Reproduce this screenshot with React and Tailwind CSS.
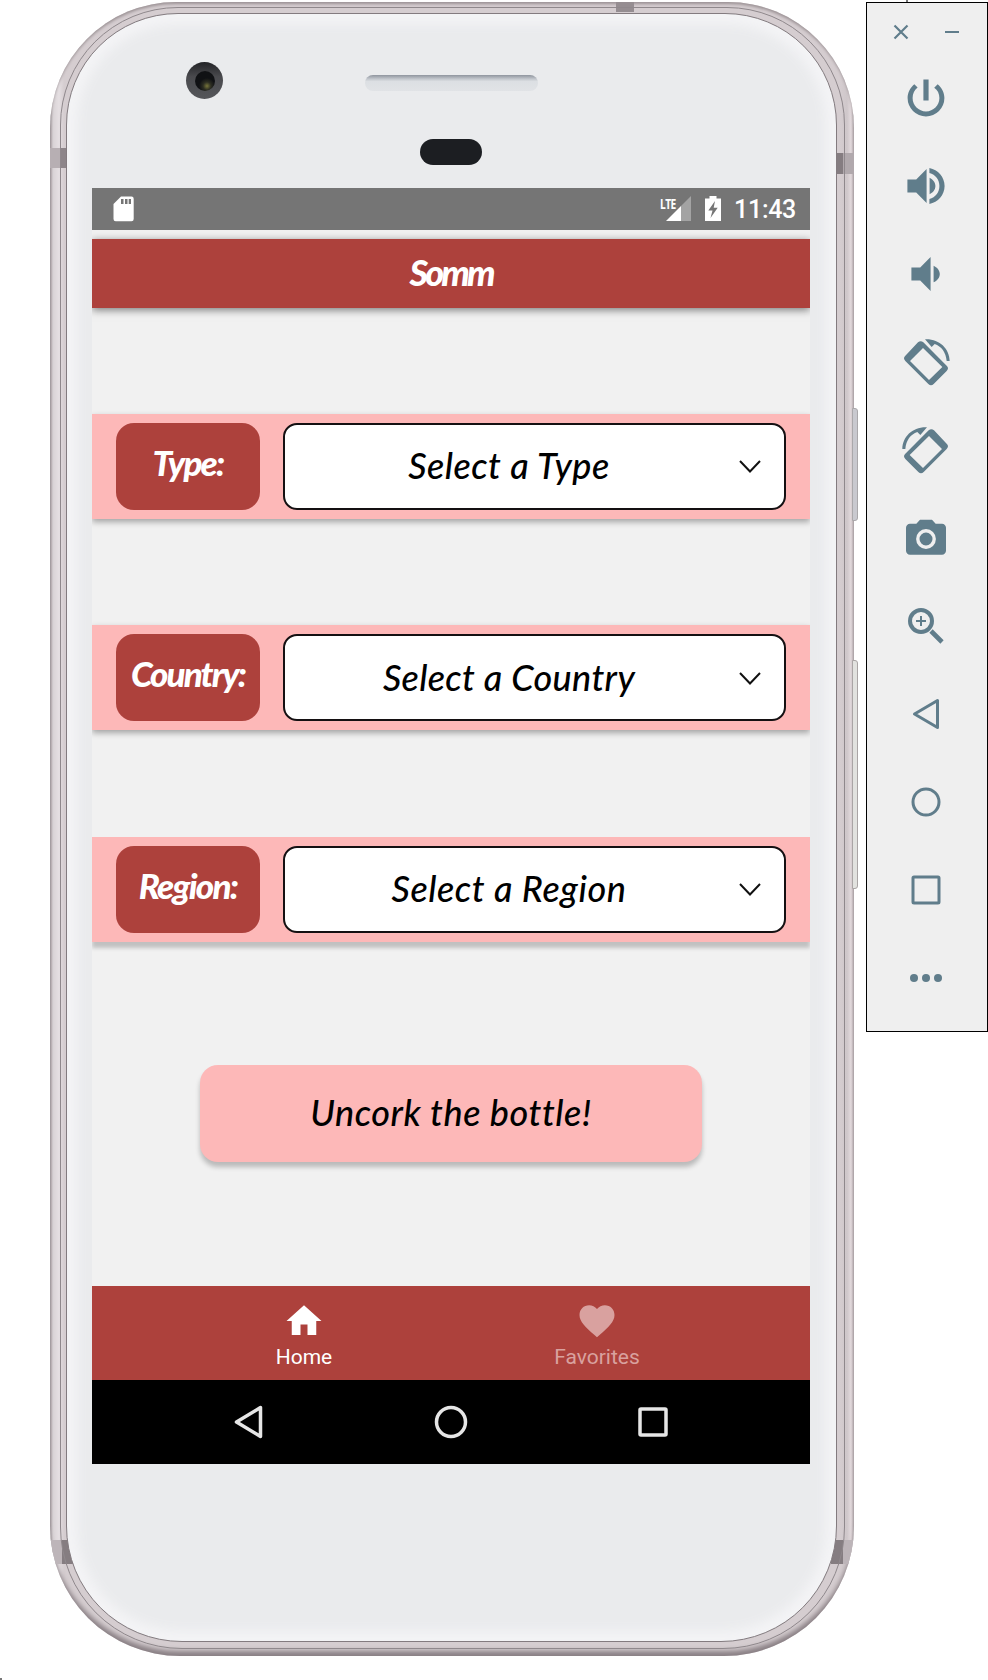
import React from "react";

const SLATE = "#607d8b";

function Glyph({ d, size = 48, fill = SLATE, className = "" }) {
  return (
    <svg width={size} height={size} viewBox="0 0 24 24" className={`shrink-0 ${className}`}>
      <path d={d} fill={fill} />
    </svg>
  );
}

function Rotate({ flip }) {
  return (
    <svg width="48" height="48" viewBox="0 0 144 144" className={flip ? "-scale-x-100" : ""}>
      <path
        fill={SLATE}
        fillRule="evenodd"
        d="M48 13Q56 6 64 13L134 83Q142 91 134 99L95 138Q87 146 79 138L10 69Q2 61 10 53ZM63 30L24 69L81 126L121 87Z"
      />
      <path fill={SLATE} d="M69 4C112 2 142 32 143 69L134 69C132 43 118 25 98 18L89 27Z" />
    </svg>
  );
}

function Triangle({ color }) {
  return (
    <svg width="48" height="48" viewBox="0 0 48 48">
      <path d="M12.5 24L35.500 10.500V37.500Z" fill="none" stroke={color} strokeWidth="3" strokeLinejoin="round" />
    </svg>
  );
}

function Toolbar() {
  return (
    <aside className="mt-[2px] ml-3 flex h-[1030px] w-[122px] flex-col border border-black bg-[#efefef] pr-[37px] pl-[35px] pt-[21px]">
      <div className="-ml-[9px] flex w-[66px] items-center justify-between">
        <svg width="16" height="16" viewBox="0 0 16 16">
          <path d="M1.500 1.500L14.500 14.500M14.500 1.500L1.500 14.500" stroke={SLATE} strokeWidth="2.200" />
        </svg>
        <svg width="14" height="16" viewBox="0 0 14 16">
          <path d="M0 8H14" stroke={SLATE} strokeWidth="2" />
        </svg>
      </div>
      <div className="mt-[34px] flex flex-col items-center gap-10">
        <Glyph d="M13.300 2.700h-2.600v10.600h2.600V2.700zM17.830 5.170l-1.720 1.720C17.800 8 18.700 9.900 18.700 12c0 3.700-3 6.700-6.700 6.700S5.300 15.700 5.300 12c0-2.100.95-4 2.500-5.200L6.170 5.170C4.230 6.820 2.800 9.260 2.800 12a9.200 9.200 0 0 0 18.400 0c0-2.740-1.430-5.180-3.370-6.830z" />
        <Glyph d="M2.700 8.700v6.600h4.400l5.200 5.200V3.500L7.100 8.700H2.700zm14 3.300c0-1.770-1.220-3.290-2.900-4.130v8.260c1.680-.83 2.900-2.250 2.900-4.130zM13.700 3v2.500c3.090.86 5 3.340 5 6.500s-1.910 5.650-5 6.500V21c4.310-.91 7.600-4.490 7.600-9S18.010 3.900 13.700 3z" />
        <Glyph d="M18.900 12c0-1.770-1.400-3.400-3.100-4.130v8.260c1.700-.73 3.100-2.250 3.100-4.130zM4.700 8.700v6.600h4.400l5.200 5.200V3.500L9.100 8.700H4.700z" />
        <Rotate />
        <Rotate flip />
        <svg width="48" height="48" viewBox="0 0 24 24">
          <path fill={SLATE} d="M9 2.900L7.170 4.900H4c-1.100 0-2 .9-2 2v11.500c0 1.100.9 2 2 2h16c1.100 0 2-.9 2-2V6.900c0-1.100-.9-2-2-2h-3.170L15 2.900H9z" />
          <circle cx="12" cy="12.500" r="4.100" fill={SLATE} stroke="#efefef" strokeWidth="1.700" />
        </svg>
        <svg width="48" height="48" viewBox="0 0 24 24" fill="none" stroke={SLATE}>
          <circle cx="9.500" cy="9.500" r="5.500" strokeWidth="2" />
          <path d="M14.500 14.500L20 20" strokeWidth="2.300" />
          <path d="M7 9.500H12M9.500 7V12" strokeWidth="1" />
        </svg>
        <Triangle color={SLATE} />
        <svg width="48" height="48" viewBox="0 0 48 48">
          <circle cx="24" cy="24" r="13" fill="none" stroke={SLATE} strokeWidth="3" />
        </svg>
        <svg width="48" height="48" viewBox="0 0 48 48">
          <rect x="11" y="11" width="26" height="26" rx="1" fill="none" stroke={SLATE} strokeWidth="3" />
        </svg>
        <svg width="48" height="48" viewBox="0 0 48 48" fill={SLATE}>
          <circle cx="12" cy="24" r="4" />
          <circle cx="24" cy="24" r="4" />
          <circle cx="36" cy="24" r="4" />
        </svg>
      </div>
    </aside>
  );
}

function StatusBar() {
  return (
    <div className="z-10 flex h-[42px] shrink-0 items-center bg-[#757575] text-white">
      <svg width="21" height="26" viewBox="0 0 21 26" className="ml-[21px]">
        <path fill="#fff" d="M8 .5H18.500Q20.700.5 20.700 2.700V23Q20.700 25.300 18.500 25.300H2.700Q.5 25.300.5 23V8Z" />
        <path fill="#757575" d="M8 3h2.500v5H8zM12 3h2.500v5H12zM15.700 3h2.300v5h-2.300z" />
      </svg>
      <div className="ml-auto flex h-[26px] items-start">
        <span className="mt-px w-[16px] font-['Open_Sans'] text-[15px] leading-[12px] font-bold tracking-[-0.8px]">
          <span className="inline-block origin-left scale-x-[0.68]">LTE</span>
        </span>
        <svg width="25" height="25" viewBox="0 0 25 25" className="-ml-[10px]">
          <path fill="#a3a3a3" d="M25 0V25H15V10Z" />
          <path fill="#fff" d="M15 10V25H0Z" />
        </svg>
        <svg width="16" height="25" viewBox="0 0 16 25" className="ml-[14px]">
          <path fill="#fff" d="M4.500 0h7v2.500H16V25H0V2.500h4.500z" />
          <path fill="#757575" d="M10 5L3.300 14.500H7.500L5.500 22L12.700 11.800H8.700Z" />
        </svg>
      </div>
      <span className="mr-[14px] ml-[13px] font-['Roboto'] text-[25px] leading-none font-medium tracking-[-0.3px]">11:43</span>
    </div>
  );
}

const rows = [
  { label: "Type:", text: "Select a Type", lt: "tracking-[-1.8px]", tt: "tracking-[0.5px]" },
  { label: "Country:", text: "Select a Country", lt: "tracking-[-1.9px]", tt: "tracking-[0.35px]" },
  { label: "Region:", text: "Select a Region", lt: "tracking-[-1.7px]", tt: "tracking-[0.55px]" },
];

function PickerRow({ row, last }) {
  return (
    <div
      className={`flex h-[105px] shrink-0 items-center bg-[#fdb8b8] px-6 ${
        last ? "shadow-[0_6px_4px_rgba(0,0,0,0.2)]" : "shadow-[0_3px_6px_rgba(0,0,0,0.32)]"
      }`}
    >
      <div className="flex h-[87px] w-36 shrink-0 items-center justify-center rounded-[18px] bg-[#ad413c] pb-[8px] text-white">
        <span className={`font-['Lato'] text-[35px] leading-none font-black whitespace-nowrap italic ${row.lt}`}>{row.label}</span>
      </div>
      <div className="ml-[23px] flex h-[87px] flex-1 items-center rounded-[14px] border-2 border-[#141012] bg-white pr-[23px] text-black">
        <span className={`flex-1 pr-[6px] pb-[2px] text-center font-['Lato'] text-[36px] leading-none font-medium whitespace-nowrap italic ${row.tt}`}>
          {row.text}
        </span>
        <svg width="22" height="14" viewBox="0 0 22 14" className="mt-[2px]">
          <path d="M1 1L11 11.500L21 1" fill="none" stroke="#111" strokeWidth="2" />
        </svg>
      </div>
    </div>
  );
}

function Screen() {
  return (
    <main className="flex h-[1276px] w-[718px] flex-col overflow-hidden bg-[#f1f1f1]">
      <StatusBar />
      <header className="mt-[8.500px] flex h-[69px] shrink-0 items-center justify-center bg-[#ad413c] pb-[3px] text-white shadow-[0_2px_8px_rgba(0,0,0,0.5)]">
        <h1 className="font-['Lato'] text-[36px] leading-none font-black tracking-[-2.900px] italic">Somm</h1>
      </header>
      <section className="mt-[106px] flex flex-col gap-[106.5px]">
        {rows.map((row, i) => (
          <PickerRow key={row.label} row={row} last={i === 2} />
        ))}
      </section>
      <button className="mx-auto mt-[123.500px] flex h-[97px] w-[502px] shrink-0 items-center justify-center rounded-[18px] bg-[#fdb8b8] pb-[3px] text-black shadow-[0_5px_5px_rgba(0,0,0,0.23)]">
        <span className="font-['Lato'] text-[36px] leading-none font-medium tracking-[0.55px] italic">Uncork the bottle!</span>
      </button>
      <nav className="mt-auto flex h-[94px] shrink-0 justify-center bg-[#ad413c] pt-[14px] pr-px font-['Roboto'] text-[21px] leading-6 text-white">
        <div className="flex w-[293px] flex-col items-center">
          <Glyph size={42} fill="#fff" d="M10 20v-6h4v6h5v-8h3L12 3 2 12h3v8z" />
          <span className="mt-[3px]">Home</span>
        </div>
        <div className="flex w-[293px] flex-col items-center text-[#d9a19f]">
          <Glyph
            size={42}
            fill="#d9a19f"
            d="M12 21.350l-1.450-1.320C5.400 15.360 2 12.280 2 8.500 2 5.420 4.420 3 7.500 3c1.740 0 3.410.81 4.500 2.090C13.090 3.810 14.760 3 16.500 3 19.580 3 22 5.420 22 8.500c0 3.780-3.400 6.860-8.550 11.540L12 21.350z"
          />
          <span className="mt-[3px]">Favorites</span>
        </div>
      </nav>
      <div className="flex h-[84px] shrink-0 items-center justify-center gap-[154px] bg-black">
        <svg width="48" height="48" viewBox="0 0 48 48" fill="none" stroke="#e6e6e6" strokeWidth="3.500" strokeLinejoin="round">
          <path d="M11.500 24L35.500 9.500V38.500Z" />
        </svg>
        <svg width="48" height="48" viewBox="0 0 48 48">
          <circle cx="24" cy="24" r="14.500" fill="none" stroke="#e6e6e6" strokeWidth="3.500" />
        </svg>
        <svg width="48" height="48" viewBox="0 0 48 48">
          <rect x="11" y="11" width="26" height="26" rx="1" fill="none" stroke="#e6e6e6" strokeWidth="3.500" />
        </svg>
      </div>
    </main>
  );
}

function Phone() {
  return (
    <div className="relative mt-[2px] ml-[50px] h-[1654px] w-[804px] shrink-0 rounded-[126px_126px_130px_130px] bg-[linear-gradient(90deg,#a59da1_0px,#d9d3d6_3px,#e5dfe2_9px,#d5cdd0_14px,#d5cdd0_790px,#cfc7ca_797px,#e3dadd_801px,#b5acb0_804px)] pt-[5px] pl-[10px] shadow-[inset_0_-7px_5px_-2px_#8a8085,inset_0_3px_3px_-1px_#9c9396]">
      <div className="absolute top-[406px] left-[802px] h-[113px] w-[6px] rounded-r-[3px] border border-[#aaa8ab] bg-[#c9c9cf]" />
      <div className="absolute top-[658px] left-[802px] h-[229px] w-[6px] rounded-r-[3px] border border-[#aaa5a5] bg-[#e2e2df]" />
      <div className="absolute inset-0 overflow-hidden rounded-[126px_126px_130px_130px]">
        <div className="absolute top-[146px] left-0 h-[20px] w-[17px] bg-[linear-gradient(90deg,#b7afb3_60%,#8d8589_61%)]" />
        <div className="absolute top-[151px] left-[786px] h-[21px] w-[18px] bg-[linear-gradient(90deg,#857d81_40%,#b1a9ad_41%)]" />
        <div className="absolute top-0 left-[566px] h-[10px] w-[18px] bg-[#958d91]" />
        <div className="absolute top-[1538px] left-0 h-[24px] w-[23px] bg-[linear-gradient(90deg,#bdb5b9_50%,#857d81_51%)]" />
        <div className="absolute top-[1538px] right-0 h-[24px] w-[23px] bg-[linear-gradient(90deg,#857d81_50%,#bdb5b9_51%)]" />
      </div>
      <div className="relative h-[1642px] w-[785px] rounded-[118px_118px_122px_122px] border border-[#8f888c] pt-[5px] pl-[5px]">
        <div className="relative h-[1629px] w-[771px] rounded-[112px_112px_116px_116px] border border-[#837b7f] bg-[#eaebed] pt-[174px] pl-[25px] shadow-[inset_0_0_12px_10px_#f4f4f6]">
          <div className="absolute top-[48px] left-[119px] flex h-[37px] w-[37px] items-center justify-center rounded-full bg-[linear-gradient(#222326,#4a4a4e_40%,#55565a)]">
            <div className="flex h-[20px] w-[20px] items-center justify-center rounded-full bg-[radial-gradient(circle_at_60%_75%,#77753a_0px,#2c2d22_4px,#101114_8px)]" />
          </div>
          <div className="absolute top-[61px] left-[298px] h-[16px] w-[173px] rounded-full bg-[linear-gradient(#8f959e,#c3c7cd_25%,#dcdfe3_40%,#e1e3e6)]" />
          <div className="absolute top-[125px] left-[353px] h-[26px] w-[62px] rounded-full bg-[#1c1e22]" />
          <Screen />
        </div>
      </div>
    </div>
  );
}

export default function App() {
  return (
    <div className="relative flex h-[1680px] w-[988px] items-start overflow-hidden bg-white">
      <Phone />
      <Toolbar />
      <div className="absolute top-0 left-[906px] h-[2px] w-[2px] bg-[#777]" />
      <div className="absolute bottom-0 left-0 h-[2px] w-[2px] bg-[#777]" />
    </div>
  );
}
